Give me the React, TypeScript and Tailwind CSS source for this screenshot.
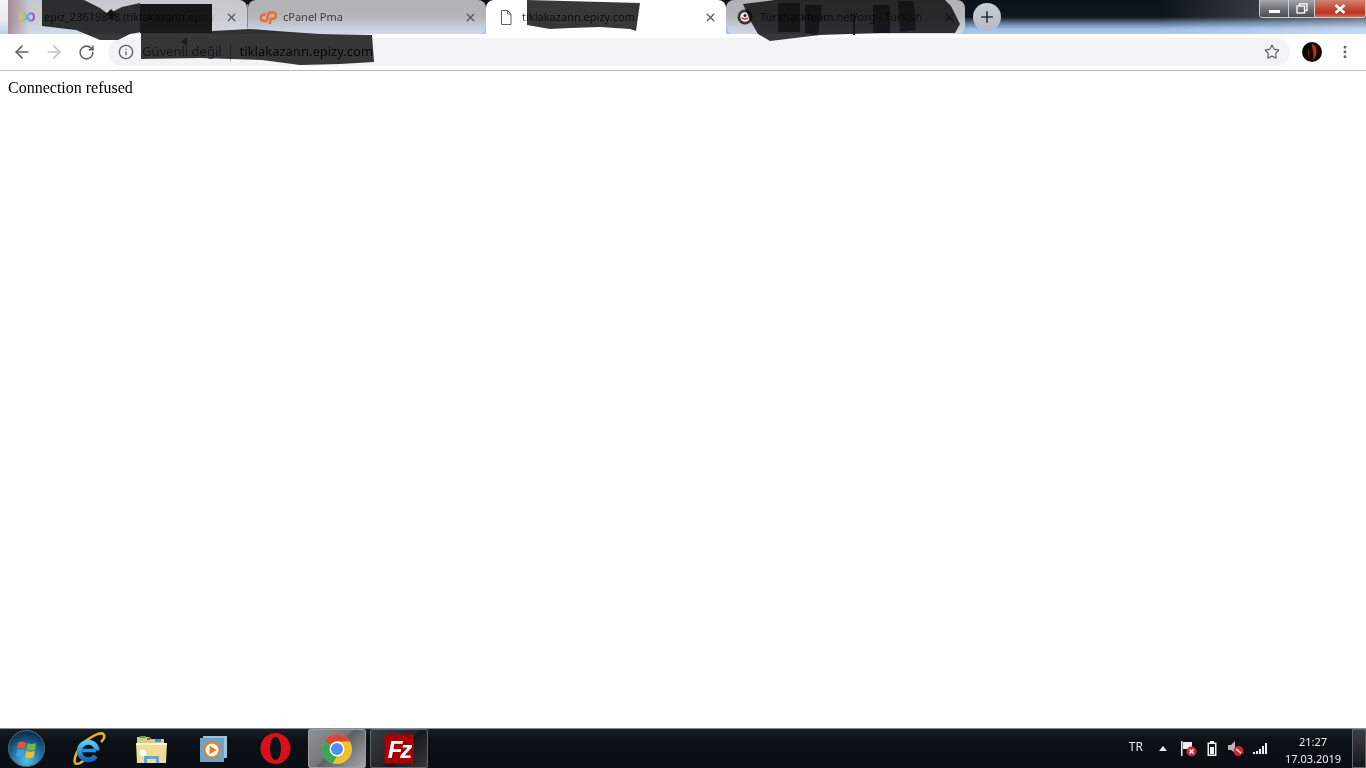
import { ArrowLeft, ArrowRight, Info, MoreVertical, Plus, RotateCw, Star, X } from "lucide-react";
import type { ReactNode } from "react";

const uiFont = "font-['Noto_Sans',sans-serif]";

function InfinityIcon() {
  return (
    <svg width="16" height="10" viewBox="0 0 16 10" fill="none">
      <defs>
        <linearGradient id="inf" x1="0" x2="1" y1="0" y2="0">
          <stop offset="0" stopColor="#f5c422" />
          <stop offset="0.5" stopColor="#45bfe0" />
          <stop offset="1" stopColor="#b548c8" />
        </linearGradient>
      </defs>
      <path d="M8 5C6.700 2.500 5.600 1.300 4 1.300 2.200 1.300 1 3 1 5s1.200 3.700 3 3.700c1.600 0 2.700-1.200 4-3.700 1.300-2.500 2.400-3.700 4-3.700 1.800 0 3 1.700 3 3.700s-1.200 3.700-3 3.700c-1.600 0-2.700-1.200-4-3.700z" stroke="url(#inf)" strokeWidth="2" />
    </svg>
  );
}

function CpanelIcon() {
  return (
    <svg width="18" height="15" viewBox="0 0 18 15" fill="none">
      <path d="M7 4.500H5a3.200 3.200 0 0 0 0 6.500h2.500L10 2.500h4a3.100 3.100 0 0 1 0 6.200h-2L10.500 14" stroke="#ec6d2f" strokeWidth="2.600" />
    </svg>
  );
}

function FileIcon() {
  return (
    <svg width="12" height="15" viewBox="0 0 12 15" fill="none" stroke="#5f6368" strokeWidth="1">
      <path d="M1.500.5h6l3.500 3.500v10.500h-9.500zM7.500.5v3.500h3.500" />
    </svg>
  );
}

function ForumIcon() {
  return (
    <svg width="16" height="16" viewBox="0 0 16 16">
      <circle cx="8" cy="8" r="7.500" fill="#3b3438" />
      <circle cx="8" cy="8" r="4.800" fill="#e8e8ea" />
      <path d="M4 8c1 3.500 7 3.500 8 0-2 1.500-6 1.500-8 0z" fill="#d2232a" />
      <circle cx="8" cy="6.500" r="1.500" fill="#2b2b2e" />
    </svg>
  );
}

function Tab({ look, icon, iconWidth, title, fade, divider }: { look: string; icon: ReactNode; iconWidth: string; title: string; fade?: boolean; divider?: boolean }) {
  return (
    <div className={`relative flex h-[34px] shrink-0 items-center pr-[9px] ${look}`}>
      <div className={`flex shrink-0 items-center ${iconWidth}`}>{icon}</div>
      <span className={`min-w-0 flex-1 overflow-hidden whitespace-nowrap text-[11px] text-[#3c4043] ${uiFont} ${fade ? "[mask-image:linear-gradient(90deg,#000_80%,transparent)]" : ""}`}>{title}</span>
      <X size={13} strokeWidth={2.400} className="ml-[3px] shrink-0 text-[#55585c]" />
      {divider && <div className="absolute right-[-1px] top-[4px] h-[23px] w-px bg-[#85878c]" />}
    </div>
  );
}

function WindowControls() {
  return (
    <div className="ml-auto flex h-[18px] w-[107px] self-start overflow-hidden rounded-b-[4px] border border-t-0 border-[#c9ced4]">
      <div className="flex w-[29px] items-end justify-center border-r border-[#c9ced4] bg-[linear-gradient(180deg,#a5a9ae,#6b7077_55%,#4a4f56)] pb-[4px]">
        <div className="h-[3px] w-[11px] bg-white" />
      </div>
      <div className="flex w-[26px] items-center justify-center border-r border-[#c9ced4] bg-[linear-gradient(180deg,#a5a9ae,#6b7077_55%,#4a4f56)]">
        <svg width="12" height="11" viewBox="0 0 12 11" fill="none" stroke="#fff" strokeWidth="1.300">
          <path d="M3.500 2.500V.8h7.500v6.700H9" />
          <rect x="1" y="3" width="7.500" height="7" />
        </svg>
      </div>
      <div className="flex flex-1 items-center justify-center bg-[linear-gradient(180deg,#cf8474,#c44a34_50%,#b8321f_75%,#d46a50)]">
        <svg width="12" height="10" viewBox="0 0 12 10" stroke="#fff" strokeWidth="2.600" fill="none">
          <path d="M1.500 1l9 8M10.500 1l-9 8" />
        </svg>
      </div>
    </div>
  );
}

function Scribbles() {
  return (
    <svg width="1366" height="72" viewBox="0 0 1366 72" className="pointer-events-none absolute left-0 top-0 mix-blend-multiply">
      <g fill="#383838">
        <path d="M42 0L84 0 100 8 108 14 122 7 140 3 141 32 130 34 118 40 100 40 76 30 42 26z" />
        <path d="M141 33L212 31 250 29 290 32 320 34 372 35 374 62 340 64 300 65 262 60 200 58 141 59z" />
        <path d="M527 0L640 3 636 31 630 29 600 27 570 28 550 29 527 25z" />
        <path d="M743 4L775 0 945 0 951 6 960 24 955 33 880 33 820 35 770 41 758 34 750 20z" />
      </g>
      <g fill="#1d1d1d">
        <path d="M140 4H212V33H140z" />
        <path d="M778 3H800V32H778zM805 5H822L818 35 805 33zM853 14H855V35H853zM873 5H890V33H873zM898 1H914L916 30 900 32z" />
        <path d="M106 14l6 5 4-5-5-5z" />
        <path d="M187 37v9l-6-4z" />
      </g>
    </svg>
  );
}

function WindowsOrb() {
  return (
    <div className="flex size-[37px] items-center justify-center rounded-full border border-[#5b6a72] bg-[radial-gradient(circle_at_50%_85%,#4fc3e8_0,#1c6fa6_45%,#0c3a5c_75%,#13222c_100%)]">
      <svg width="22" height="20" viewBox="0 0 24 22">
        <path d="M2 4c3-1.500 6-1.500 9 0l-1 7c-3-1.500-6-1.500-9 0z" fill="#e2562f" />
        <path d="M12.500 4.500c3 1.500 6 1.500 9.500 0l-1 7c-3 1.500-6 1.500-9.500 0z" fill="#79b53a" />
        <path d="M1 12.500c3-1.500 6-1.500 8.800 0l-1 7c-3-1.500-6-1.500-8.800 0z" fill="#3ea0dc" />
        <path d="M11 13c3 1.500 6 1.500 9.500 0l-1 7c-3 1.500-6 1.500-9.500 0z" fill="#f0bb2c" />
      </svg>
    </div>
  );
}

function IeIcon() {
  return (
    <svg width="34" height="33" viewBox="0 0 34 33" fill="none">
      <defs>
        <linearGradient id="ie" x1="0" x2="0" y1="0" y2="1">
          <stop offset="0" stopColor="#5cc8f2" />
          <stop offset="1" stopColor="#1466b8" />
        </linearGradient>
      </defs>
      <path d="M3 31C1 26 7 14 15 8 22 3 30-1 32 3c1 2-1 5-3 7" stroke="#e6b02a" strokeWidth="2.600" />
      <path d="M3 31c2 2 6 0 9-3" stroke="#e6b02a" strokeWidth="2.600" />
      <path d="M25 18.500A8.800 8.800 0 1 0 23.500 24" stroke="url(#ie)" strokeWidth="5" />
      <path d="M9 18.500h15" stroke="#2a8fd8" strokeWidth="3.600" />
    </svg>
  );
}

function FolderIcon() {
  return (
    <svg width="33" height="30" viewBox="0 0 33 30">
      <path d="M2 3h12l2 2h13v6H2z" fill="#d9c98a" />
      <path d="M5 2h6v2H5z" fill="#3fae49" />
      <path d="M12 4h3v2h-3z" fill="#d1453b" />
      <path d="M20 5h6v3h-6z" fill="#3f8fdc" />
      <path d="M1 9h31l-1 20H2z" fill="#f0dc9a" />
      <path d="M1 9h31v2H1z" fill="#fbf3cf" />
      <path d="M9 29v-7h15v7h-3v-4h-9v4z" fill="#5fa7d8" />
      <circle cx="8" cy="19" r="3.500" fill="#ffffff" opacity="0.900" />
    </svg>
  );
}

function MediaPlayerIcon() {
  return (
    <svg width="27" height="26" viewBox="0 0 27 26">
      <rect x="3" y="0" width="24" height="22" fill="#9cc4dc" />
      <rect x="0" y="2" width="24" height="24" fill="#6ea3c6" />
      <circle cx="12" cy="14" r="8.500" fill="#ef7d1f" />
      <circle cx="12" cy="14" r="6.500" fill="#ffffff" />
      <path d="M9.500 9.500l7 4.500-7 4.500z" fill="#ef7d1f" />
    </svg>
  );
}

function OperaIcon() {
  return (
    <svg width="31" height="31" viewBox="0 0 31 31">
      <ellipse cx="15.500" cy="15.500" rx="15" ry="15.500" fill="#d8101c" />
      <ellipse cx="15.500" cy="15.500" rx="5.500" ry="11.500" fill="#0b1118" />
    </svg>
  );
}

function ChromeIcon() {
  return (
    <svg width="30" height="30" viewBox="0 0 30 30">
      <circle cx="15" cy="15" r="15" fill="#f2c12e" />
      <path d="M15 0a15 15 0 0 1 13 7.500H15a7.500 7.500 0 0 0-6.500 3.800L2.200 7.300A15 15 0 0 1 15 0z" fill="#d8483b" />
      <path d="M2.200 7.300l6.300 4 6.500 11.200-4.500 7A15 15 0 0 1 2.200 7.300z" fill="#3aa757" />
      <circle cx="15" cy="15" r="7.500" fill="#ffffff" />
      <circle cx="15" cy="15" r="6" fill="#4f8df0" />
    </svg>
  );
}

function FilezillaIcon() {
  return (
    <svg width="30" height="30" viewBox="0 0 30 30">
      <rect x="1" y="1" width="28" height="28" fill="#a80000" stroke="#a80000" strokeWidth="2" strokeDasharray="2 2" />
      <rect x="2" y="2" width="26" height="26" fill="#a80000" />
      <text x="15" y="24" textAnchor="middle" fontSize="24" fontWeight="700" fontStyle="italic" fontFamily="Liberation Sans, sans-serif" letterSpacing="-2" fill="#ffffff">Fz</text>
    </svg>
  );
}

function TaskSlot({ children, pressed, open }: { children: ReactNode; pressed?: boolean; open?: boolean }) {
  const look = pressed
    ? "border border-[#9a9ea3] rounded-[2px] bg-[linear-gradient(135deg,#8f9296,#74777b_45%,#5d6064_50%,#a5a8ab)]"
    : open
      ? "border border-[#5f6468] rounded-[2px] bg-[linear-gradient(135deg,#383c40,#23272b_50%,#15191d_55%,#34383c)]"
      : "";
  return <div className={`flex h-[39px] w-[58px] shrink-0 items-center justify-center ${look}`}>{children}</div>;
}

function Tray() {
  return (
    <div className={`ml-auto flex h-full items-center text-white ${uiFont}`}>
      <span className="mb-[4px] text-[12px] text-[#e8e8e8]">TR</span>
      <svg width="8" height="5" viewBox="0 0 8 5" className="ml-[16px]"><path d="M4 0l4 5H0z" fill="#e8e8e8" /></svg>
      <svg width="17" height="17" viewBox="0 0 17 17" className="ml-[13px]">
        <path d="M1 1h1.500v15H1z" fill="#eee" />
        <path d="M3 2h9v7H3z" fill="#eee" />
        <circle cx="11.500" cy="11.500" r="5" fill="#d8232a" />
        <path d="M9.500 9.500l4 4M13.500 9.500l-4 4" stroke="#fff" strokeWidth="1.400" />
      </svg>
      <svg width="10" height="15" viewBox="0 0 10 15" className="ml-[10px]">
        <path d="M3 0h4v1.500h2.500V15H.5V1.500H3z" fill="#eee" />
        <path d="M2 3h6v10.500H2z" fill="#14181c" />
        <path d="M3 6h4v7H3z" fill="#eee" />
      </svg>
      <svg width="16" height="15" viewBox="0 0 16 15" className="ml-[11px]">
        <path d="M0 4h3l4-4v12L3 9H0z" fill="#b5b5b5" />
        <circle cx="10.500" cy="10" r="5" fill="#d8232a" />
        <path d="M8 8l5 4" stroke="#fff" strokeWidth="1.600" />
      </svg>
      <svg width="15" height="11" viewBox="0 0 15 11" className="ml-[9px]" fill="#f0f0f0">
        <path d="M0 9h2v2H0zM3 8h2v3H3zM6 6h2v5H6zM9 3h2v8H9zM12 0h2v11h-2z" />
      </svg>
      <div className="ml-[17px] flex w-[56px] flex-col items-center pt-[2px] text-[11px] leading-[17px] text-[#f0f0f0]">
        <span>21:27</span>
        <span className="whitespace-nowrap">17.03.2019</span>
      </div>
      <div className="ml-[11px] h-full w-[14px] border border-[#5f6468] bg-[linear-gradient(180deg,#3b3f44,#14181c)]" />
    </div>
  );
}

export default function App() {
  return (
    <div className="relative flex h-[768px] w-[1366px] flex-col overflow-hidden bg-white">
      {/* tab strip */}
      <div className="flex h-[34px] shrink-0 items-start bg-[linear-gradient(90deg,transparent_1160px,rgba(255,255,255,0.35)_1366px),linear-gradient(180deg,#0c1219_0,#0f151c_17px,#5d7696_23px,#9fc0ea_29px,#a8c8ee_34px)]">
        <div className="h-[34px] w-[8px] shrink-0 bg-[linear-gradient(180deg,#f4f4f5_0,#e8eaee_60%,#b9cfef_100%)]" />
        <Tab
          look="w-[239px] mr-px rounded-tr-[8px] bg-[linear-gradient(90deg,rgba(140,95,105,0.6)_0,transparent_22px),linear-gradient(180deg,#c6c8cd_0,#cacdd3_60%,#d3dbe8_100%)]"
          iconWidth="w-[36px] pl-[11px]"
          icon={<InfinityIcon />}
          title="epiz_23619848 (tiklakazann.epizy"
          fade
          divider
        />
        <Tab
          look="w-[238px] rounded-t-[8px] rounded-br-[8px] bg-[linear-gradient(180deg,#b1b2b6_0,#b5b6ba_50%,#c4ccd8_78%,#ced9e8_100%)]"
          iconWidth="w-[35px] pl-[11px]"
          icon={<CpanelIcon />}
          title="cPanel Pma"
        />
        <Tab look="w-[240px] rounded-t-[8px] bg-white" iconWidth="w-[36px] pl-[14px]" icon={<FileIcon />} title="tiklakazann.epizy.com" />
        <Tab
          look="w-[239px] rounded-[8px] bg-[linear-gradient(180deg,#b1b2b6_0,#b5b6ba_50%,#c4ccd8_78%,#ced9e8_100%)]"
          iconWidth="w-[34px] pl-[11px]"
          icon={<ForumIcon />}
          title="Türkhackteam.net/org - Turkish"
        />
        <div className="ml-[8px] mt-[3px] flex size-[28px] shrink-0 items-center justify-center rounded-full bg-[linear-gradient(180deg,#c9cdd3,#b3bcc9)]">
          <Plus size={18} strokeWidth={2.200} className="text-[#2f3236]" />
        </div>
        <WindowControls />
      </div>

      {/* toolbar */}
      <div className="flex h-[37px] shrink-0 items-center border-b border-[#b9b9b9] bg-white pl-[6px]">
        <div className="flex w-[32px] justify-center"><ArrowLeft size={20} strokeWidth={2} className="text-[#5f6368]" /></div>
        <div className="flex w-[32px] justify-center"><ArrowRight size={20} strokeWidth={2} className="text-[#bdc1c6]" /></div>
        <div className="flex w-[32px] justify-center"><RotateCw size={17} strokeWidth={2.200} className="text-[#5f6368]" /></div>
        <div className={`ml-[6px] flex h-[28px] w-[1182px] items-center rounded-full bg-[#f1f3f4] pl-[10px] pr-[10px] text-[13px] ${uiFont}`}>
          <Info size={16} strokeWidth={2} className="text-[#5f6368]" />
          <span className="ml-[8px] text-[#5f6368]">Güvenli değil</span>
          <div className="ml-[8px] h-[18px] w-px bg-[#9aa0a6]" />
          <span className="ml-[9px] text-[#202124]">tiklakazann.epizy.com</span>
          <Star size={16} strokeWidth={1.800} className="ml-auto text-[#5f6368]" />
        </div>
        <svg width="20" height="20" viewBox="0 0 20 20" className="ml-[12px]">
          <circle cx="10" cy="10" r="10" fill="#0f0808" />
          <path d="M10 2c4 1 5 5 4.500 9-.4 3-2 6-4 7 1-3 1.500-6 .5-9-.4-1.500-1-3-1-7z" fill="#b5301a" />
          <path d="M7 6c-1.500 3-1.500 7 0 10 .5-3 .5-7 0-10z" fill="#7a1c0e" />
        </svg>
        <MoreVertical size={16} strokeWidth={2.400} className="ml-[15px] text-[#5f6368]" />
      </div>

      {/* page */}
      <div className="flex-1 px-[8px] pt-[8px] font-['Liberation_Serif',serif] text-[16px] leading-[18px] text-black">Connection refused</div>

      {/* taskbar */}
      <div className="flex h-[40px] shrink-0 items-center border-t border-[#878c91] bg-[linear-gradient(180deg,#1a1f25,#0b1016_30%,#0a0f15)]">
        <div className="flex w-[60px] shrink-0 justify-start pl-[8px]"><WindowsOrb /></div>
        <div className="flex w-[370px] shrink-0 gap-[4px]">
          <TaskSlot><IeIcon /></TaskSlot>
          <TaskSlot><FolderIcon /></TaskSlot>
          <TaskSlot><MediaPlayerIcon /></TaskSlot>
          <TaskSlot><OperaIcon /></TaskSlot>
          <TaskSlot pressed><ChromeIcon /></TaskSlot>
          <TaskSlot open><FilezillaIcon /></TaskSlot>
        </div>
        <Tray />
      </div>

      <Scribbles />
    </div>
  );
}
